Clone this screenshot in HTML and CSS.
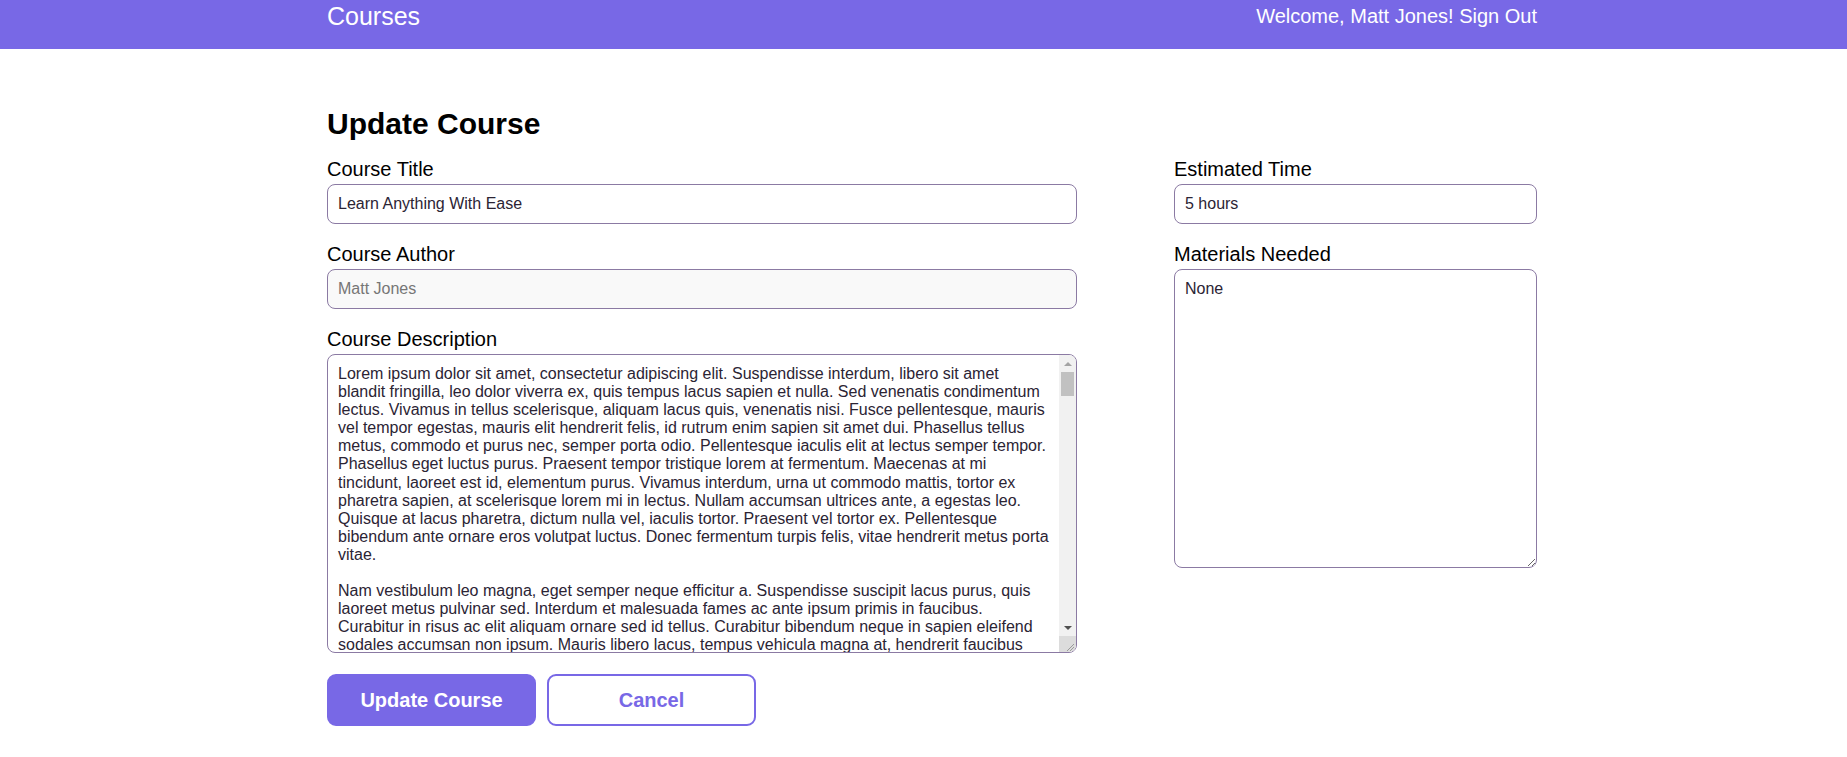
FILE: index.html
```html
<!DOCTYPE html>
<html lang="en">
<head>
<meta charset="utf-8">
<title>Courses</title>
<link rel="stylesheet" href="styles.css">
</head>
<body>
<header class="header">
  <div class="wrap header-bar">
    <span class="brand">Courses</span>
    <nav class="user-nav"><span>Welcome, Matt Jones!</span> <a class="signout" href="#">Sign Out</a></nav>
  </div>
</header>
<main class="wrap main">
  <h2 class="page-title">Update Course</h2>
  <form class="form">
    <div class="columns">
      <div class="col">
        <div class="field">
          <label class="label" for="title">Course Title</label>
          <input class="input" id="title" type="text" value="Learn Anything With Ease">
        </div>
        <div class="field">
          <label class="label" for="author">Course Author</label>
          <input class="input input-readonly" id="author" type="text" placeholder="Matt Jones" readonly>
        </div>
        <div class="field">
          <label class="label" for="desc">Course Description</label>
          <div class="textarea-wrap">
            <textarea class="textarea textarea-long" id="desc">Lorem ipsum dolor sit amet, consectetur adipiscing elit. Suspendisse interdum, libero sit amet blandit fringilla, leo dolor viverra ex, quis tempus lacus sapien et nulla. Sed venenatis condimentum lectus. Vivamus in tellus scelerisque, aliquam lacus quis, venenatis nisi. Fusce pellentesque, mauris vel tempor egestas, mauris elit hendrerit felis, id rutrum enim sapien sit amet dui. Phasellus tellus metus, commodo et purus nec, semper porta odio. Pellentesque iaculis elit at lectus semper tempor. Phasellus eget luctus purus. Praesent tempor tristique lorem at fermentum. Maecenas at mi tincidunt, laoreet est id, elementum purus. Vivamus interdum, urna ut commodo mattis, tortor ex pharetra sapien, at scelerisque lorem mi in lectus. Nullam accumsan ultrices ante, a egestas leo. Quisque at lacus pharetra, dictum nulla vel, iaculis tortor. Praesent vel tortor ex. Pellentesque bibendum ante ornare eros volutpat luctus. Donec fermentum turpis felis, vitae hendrerit metus porta vitae.

Nam vestibulum leo magna, eget semper neque efficitur a. Suspendisse suscipit lacus purus, quis laoreet metus pulvinar sed. Interdum et malesuada fames ac ante ipsum primis in faucibus. Curabitur in risus ac elit aliquam ornare sed id tellus. Curabitur bibendum neque in sapien eleifend sodales accumsan non ipsum. Mauris libero lacus, tempus vehicula magna at, hendrerit faucibus lorem. Donec quis lorem blandit, tempor massa at, dapibus sapien. Nunc sit amet ultricies dolor. Sed in nisi non ex fermentum laoreet. Vestibulum vitae ex nisl. Aliquam erat volutpat. Integer at turpis vel arcu venenatis pellentesque.

Donec eget enim quis magna dapibus ultricies. Fusce ac pulvinar leo. Integer vitae velit vel dolor dignissim sollicitudin. Phasellus vel magna in justo pellentesque mollis. Suspendisse potenti. Cras sit amet lorem in mi venenatis tincidunt. Vestibulum ante ipsum primis in faucibus orci luctus et ultrices posuere cubilia curae; Donec id nunc vel ligula tincidunt ultricies. Aenean euismod, libero eget feugiat tincidunt, sapien massa pretium orci, vel luctus magna sapien sed arcu. Morbi ac nibh ut lacus pharetra sodales.

Praesent sit amet feugiat nunc. Curabitur sed mauris non mi iaculis placerat. Nulla facilisi. Pellentesque habitant morbi tristique senectus et netus et malesuada fames ac turpis egestas. Sed porta, nisl ut sagittis venenatis, tortor urna tincidunt sapien, at efficitur purus ante vel lacus. Vivamus dignissim elit a tortor hendrerit, eget congue tellus aliquet. Etiam consequat arcu nec quam pretium, id lacinia nunc feugiat. Duis nec dui vel ipsum semper ornare.

Quisque tempus lectus vitae elit euismod, nec tincidunt lectus iaculis. Nunc volutpat odio eu lacus luctus, eget malesuada sapien rutrum. Ut at leo dictum, dapibus lorem in, faucibus nibh. Suspendisse et aliquam leo. Sed eu convallis nunc. In hac habitasse platea dictumst. Proin at eros a nisl porttitor interdum. Mauris congue ipsum sit amet augue consequat, a vestibulum lorem accumsan. Maecenas rhoncus magna vel sapien faucibus, quis tempus nulla dignissim.

Etiam vehicula ex ut turpis viverra, quis euismod purus pulvinar. Aliquam ac lacus sed dolor lacinia convallis. Fusce sed tortor vitae neque hendrerit rhoncus. Vivamus semper magna quis lectus aliquet, id efficitur augue placerat. Cras efficitur eros at elit consectetur, nec vulputate dui tempor. Sed et sem sit amet sem posuere facilisis. Nam ultricies velit sed lacus viverra, sit amet gravida eros consequat.

Morbi vulputate elit quis orci feugiat, a bibendum ipsum vehicula. Integer non erat vitae sapien porttitor aliquet. Pellentesque at lectus gravida, posuere turpis vitae, pulvinar nisi. Nullam lobortis libero eget magna faucibus, eget tincidunt nunc pharetra. Curabitur sed diam vel nisi malesuada luctus. Phasellus rhoncus mauris at libero sodales, quis gravida nibh ullamcorper. In sit amet risus quis nulla ultrices egestas.</textarea>
            <div class="scrollbar" aria-hidden="true">
              <span class="sb-btn sb-up"><span class="sb-arrow sb-arrow-up"></span></span>
              <span class="sb-thumb"></span>
              <span class="sb-track"></span>
              <span class="sb-btn sb-down"><span class="sb-arrow sb-arrow-down"></span></span>
              <span class="sb-corner">
                <svg width="17" height="16" viewBox="0 0 17 16"><path d="M15 8 L8 15 M15 11 L11 15" stroke="#9a9a9a" stroke-width="1" fill="none"/></svg>
              </span>
            </div>
          </div>
        </div>
      </div>
      <div class="col">
        <div class="field">
          <label class="label" for="time">Estimated Time</label>
          <input class="input" id="time" type="text" value="5 hours">
        </div>
        <div class="field">
          <label class="label" for="materials">Materials Needed</label>
          <textarea class="textarea" id="materials">None</textarea>
        </div>
      </div>
    </div>
    <div class="actions">
      <button class="btn btn-primary" type="button">Update Course</button>
      <button class="btn btn-secondary" type="button">Cancel</button>
    </div>
  </form>
</main>
</body>
</html>
```
FILE: styles.css
```css
* { box-sizing: border-box; }

html, body {
  margin: 0;
  padding: 0;
  background: #fff;
  font-family: "Liberation Sans", Arial, sans-serif;
  color: #000;
}

.wrap {
  width: 1227px;
  padding-left: 17px;
  margin: 0 auto;
}

.header {
  background: #7868e6;
  height: 49px;
  color: #fff;
}

.header-bar {
  display: flex;
  justify-content: space-between;
  align-items: center;
  height: 31px;
  padding-top: 2px;
}

.brand {
  font-size: 25px;
  line-height: 29px;
}

.user-nav {
  font-size: 20px;
  line-height: 23px;
}

.signout {
  color: #fff;
  text-decoration: none;
}

.main {
  padding-top: 58px;
}

.page-title {
  font-size: 30px;
  font-weight: bold;
  line-height: 34px;
  margin: 0 0 16.5px;
}

.columns {
  display: flex;
  justify-content: space-between;
}

.col:first-child { width: 750px; }
.col:last-child { width: 363px; }

.field {
  margin-bottom: 19px;
}

.label {
  display: block;
  font-size: 20px;
  line-height: 23px;
  margin-bottom: 3.5px;
}

.input,
.textarea {
  display: block;
  width: 100%;
  font-family: "Liberation Sans", Arial, sans-serif;
  font-size: 16px;
  color: #2b2434;
  border: 1px solid #8b7aa3;
  border-radius: 8px;
  background: #fff;
  padding: 0 10px;
  outline: none;
}

.input {
  height: 39.5px;
}

.input-readonly {
  background: #f9f9f9;
}

.input-readonly::placeholder {
  color: #767676;
}

.textarea {
  height: 299px;
  padding: 10px;
  line-height: 18.1px;
  resize: vertical;
}

.textarea-wrap {
  position: relative;
}

.textarea-long {
  padding-right: 27px;
  resize: none;
  overflow: hidden;
}

.scrollbar {
  position: absolute;
  top: 1px;
  right: 1px;
  bottom: 1px;
  width: 17px;
  background: #f1f1f1;
  border-radius: 0 7px 7px 0;
  overflow: hidden;
  display: flex;
  flex-direction: column;
}

.sb-btn {
  height: 17px;
  flex: none;
  display: flex;
  align-items: center;
  justify-content: center;
}

.sb-arrow {
  width: 0;
  height: 0;
  border-left: 4px solid transparent;
  border-right: 4px solid transparent;
}

.sb-arrow-up {
  border-bottom: 4px solid #a3a3a3;
}

.sb-arrow-down {
  border-top: 4px solid #505050;
}

.sb-thumb {
  flex: none;
  height: 24px;
  margin: 0 2px;
  background: #c1c1c1;
}

.sb-track {
  flex: 1;
}

.sb-corner {
  flex: none;
  height: 16px;
  background: #dcdcdc;
  display: block;
}

.sb-corner svg {
  display: block;
}

.actions {
  display: flex;
  gap: 11px;
  margin-top: 2px;
}

.btn {
  width: 209px;
  height: 52px;
  border-radius: 9px;
  font-family: "Liberation Sans", Arial, sans-serif;
  font-size: 20px;
  font-weight: bold;
  cursor: pointer;
}

.btn-primary {
  background: #7868e6;
  border: 2px solid #7868e6;
  color: #fff;
}

.btn-secondary {
  background: #fff;
  border: 2px solid #7868e6;
  color: #7868e6;
}
```
